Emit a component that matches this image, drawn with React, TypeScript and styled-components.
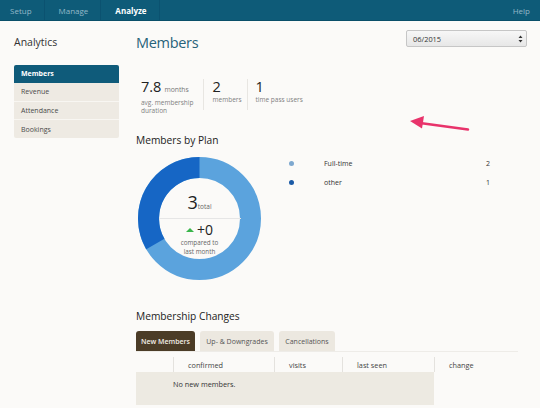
import React from 'react';
import styled, { createGlobalStyle } from 'styled-components';

const GlobalStyle = createGlobalStyle`
  html, body {
    margin: 0;
    padding: 0;
    background: #fbfaf8;
    font-family: "Open Sans", "Noto Sans", sans-serif;
    color: #333;
  }
  * { box-sizing: border-box; }
`;

const Page = styled.div`
  position: relative;
  width: 540px;
  height: 408px;
  overflow: hidden;
`;

const NavBar = styled.div`
  display: flex;
  align-items: stretch;
  height: 21px;
  background: #0e5b78;
  border-bottom: 1px solid #0a4f69;
`;

const NavItem = styled.div<{ $active?: boolean }>`
  display: flex;
  align-items: center;
  padding: 0 12px 0 14px;
  font-size: 8px;
  font-weight: ${(p) => (p.$active ? 700 : 400)};
  color: ${(p) => (p.$active ? '#ffffff' : '#94b8c8')};
  border-right: 1px solid #0b5270;
  &:first-child { padding-left: 10px; }
`;

const NavSpacer = styled.div`
  flex: 1;
`;

const NavHelp = styled.div`
  display: flex;
  align-items: center;
  padding-right: 10px;
  font-size: 8px;
  color: #94b8c8;
`;

const Body = styled.div`
  display: flex;
  gap: 17px;
  padding: 9px 13px 0 14px;
`;

const Sidebar = styled.div`
  width: 105px;
  flex-shrink: 0;
  padding-top: 5px;
`;

const SideTitle = styled.div`
  font-size: 10.5px;
  line-height: 14px;
  color: #333;
  margin-bottom: 16px;
`;

const SideMenu = styled.div`
  display: flex;
  flex-direction: column;
  border-radius: 2px;
  overflow: hidden;
`;

const SideItem = styled.div<{ $active?: boolean }>`
  height: 18.3px;
  display: flex;
  align-items: center;
  padding-left: 7px;
  font-size: 7px;
  font-weight: ${(p) => (p.$active ? 700 : 400)};
  color: ${(p) => (p.$active ? '#ffffff' : '#4a4a4a')};
  background: ${(p) => (p.$active ? '#0f5b7a' : '#eeeae3')};
  border-bottom: 1px solid ${(p) => (p.$active ? '#0f5b7a' : '#f8f6f2')};
  &:last-child { border-bottom: none; }
`;

const Main = styled.div`
  flex: 1;
  display: flex;
  flex-direction: column;
`;

const HeaderRow = styled.div`
  display: flex;
  justify-content: space-between;
  align-items: flex-start;
`;

const Title = styled.h1`
  margin: 3px 0 0 0;
  font-size: 14.5px;
  line-height: 20px;
  font-weight: 400;
  letter-spacing: -0.3px;
  color: #28637a;
`;

const Select = styled.div`
  width: 121px;
  height: 17px;
  display: flex;
  align-items: center;
  justify-content: space-between;
  padding: 0 3px 0 6px;
  font-size: 7.4px;
  color: #333;
  background: linear-gradient(#f7f7f7, #e7e7e7);
  border: 1px solid #c6c6c6;
  border-radius: 2px;
`;

const Stats = styled.div`
  display: flex;
  margin-top: 26px;
  padding-left: 5px;
`;

const Stat = styled.div<{ $pad?: number }>`
  height: 31px;
  padding-right: ${(p) => p.$pad ?? 7}px;
  margin-right: 8px;
  border-right: 1px solid #e8e6e2;
  &:last-child { border-right: none; }
`;

const StatValue = styled.div`
  font-size: 14.5px;
  line-height: 16px;
  color: #222;
`;

const StatUnit = styled.span`
  font-size: 6.8px;
  color: #777;
  margin-left: 3px;
`;

const StatLabel = styled.div`
  font-size: 6.5px;
  line-height: 8px;
  color: #808080;
  margin-top: 1px;
`;

const SectionTitle = styled.h2<{ $top: number }>`
  margin: ${(p) => p.$top}px 0 0 0;
  font-size: 10.2px;
  line-height: 14px;
  font-weight: 400;
  color: #222;
`;

const PlanRow = styled.div`
  display: flex;
  margin-top: 10px;
`;

const DonutWrap = styled.div`
  position: relative;
  width: 123px;
  height: 123px;
  flex-shrink: 0;
  margin-left: 2px;
`;

const DonutCenter = styled.div`
  position: absolute;
  inset: 0;
  display: grid;
  grid-template-rows: 1fr 1fr;
  justify-items: center;
`;

const TopHalf = styled.div`
  align-self: end;
  width: 82px;
  display: flex;
  justify-content: center;
  padding-bottom: 2px;
  border-bottom: 1px solid #e6e6e6;
`;

const BottomHalf = styled.div`
  display: flex;
  flex-direction: column;
  align-items: center;
`;

const TotalLine = styled.div`
  font-size: 18px;
  line-height: 18px;
  color: #222;
`;

const TotalUnit = styled.span`
  font-size: 6.5px;
  color: #666;
`;

const ChangeLine = styled.div`
  display: flex;
  align-items: center;
  gap: 3px;
  margin-top: 3px;
  font-size: 14px;
  line-height: 16px;
  color: #222;
`;

const UpTriangle = styled.span`
  width: 0;
  height: 0;
  border-left: 4px solid transparent;
  border-right: 4px solid transparent;
  border-bottom: 4px solid #39b54a;
`;

const Compared = styled.div`
  font-size: 6.3px;
  line-height: 9.5px;
  color: #666;
  text-align: center;
`;

const Legend = styled.div`
  flex: 1;
  display: flex;
  flex-direction: column;
  gap: 9px;
  padding: 1px 37px 0 28px;
`;

const LegendRow = styled.div`
  display: grid;
  grid-template-columns: 35px 1fr auto;
  align-items: center;
  height: 10px;
  font-size: 7px;
  color: #333;
`;

const Dot = styled.span<{ $color: string }>`
  width: 5px;
  height: 5px;
  border-radius: 50%;
  background: ${(p) => p.$color};
`;

const Tabs = styled.div`
  display: flex;
  gap: 5px;
  margin-top: 8px;
  margin-right: 9px;
  border-bottom: 1px solid #eeece8;
`;

const Tab = styled.div<{ $active?: boolean; $w: number }>`
  width: ${(p) => p.$w}px;
  height: 20px;
  display: flex;
  align-items: center;
  justify-content: center;
  font-size: 7px;
  font-weight: ${(p) => (p.$active ? 600 : 400)};
  color: ${(p) => (p.$active ? '#f3efe7' : '#555')};
  background: ${(p) => (p.$active ? '#4b3c27' : '#ece8e0')};
  border-radius: 3px 3px 0 0;
`;

const Table = styled.div`
  display: grid;
  grid-template-columns: 37px 101px 68px 92px 1fr;
  margin-top: 5px;
  margin-right: 9px;
`;

const HeadCell = styled.div`
  height: 15px;
  display: flex;
  align-items: center;
  padding-left: 14px;
  font-size: 7.3px;
  color: #444;
  border-left: 1px solid #e4e2de;
  &:first-child { border-left: none; }
`;

const EmptyRow = styled.div`
  grid-column: 1 / 5;
  height: 33px;
  background: #edeae2;
  padding: 7px 0 0 37px;
  font-size: 7.3px;
  color: #333;
`;

const Arrow = styled.svg`
  position: absolute;
  left: 405px;
  top: 112px;
`;

export default function App() {
  return (
    <Page>
      <GlobalStyle />
      <NavBar>
        <NavItem>Setup</NavItem>
        <NavItem>Manage</NavItem>
        <NavItem $active>Analyze</NavItem>
        <NavSpacer />
        <NavHelp>Help</NavHelp>
      </NavBar>
      <Body>
        <Sidebar>
          <SideTitle>Analytics</SideTitle>
          <SideMenu>
            <SideItem $active>Members</SideItem>
            <SideItem>Revenue</SideItem>
            <SideItem>Attendance</SideItem>
            <SideItem>Bookings</SideItem>
          </SideMenu>
        </Sidebar>
        <Main>
          <HeaderRow>
            <Title>Members</Title>
            <Select>
              <span>06/2015</span>
              <svg width="5" height="8" viewBox="0 0 5 8">
                <path d="M0.5 3 L2.5 0.5 L4.5 3 Z M0.5 5 L2.5 7.5 L4.5 5 Z" fill="#333" />
              </svg>
            </Select>
          </HeaderRow>
          <Stats>
            <Stat $pad={10}>
              <StatValue>
                7.8<StatUnit>months</StatUnit>
              </StatValue>
              <StatLabel>
                avg. membership
                <br />
                duration
              </StatLabel>
            </Stat>
            <Stat $pad={5}>
              <StatValue>2</StatValue>
              <StatLabel>members</StatLabel>
            </Stat>
            <Stat>
              <StatValue>1</StatValue>
              <StatLabel>time pass users</StatLabel>
            </Stat>
          </Stats>
          <SectionTitle $top={23}>Members by Plan</SectionTitle>
          <PlanRow>
            <DonutWrap>
              <svg width="123" height="123" viewBox="0 0 123 123">
                <circle cx="61.5" cy="61.5" r="51" fill="none" stroke="#5ba3dd" strokeWidth="21" />
                <path
                  d="M61.5 10.5 A51 51 0 0 0 17.33 87"
                  fill="none"
                  stroke="#1666c5"
                  strokeWidth="21"
                />
              </svg>
              <DonutCenter>
                <TopHalf>
                  <TotalLine>
                    3<TotalUnit>total</TotalUnit>
                  </TotalLine>
                </TopHalf>
                <BottomHalf>
                  <ChangeLine>
                    <UpTriangle />
                    +0
                  </ChangeLine>
                  <Compared>
                    compared to
                    <br />
                    last month
                  </Compared>
                </BottomHalf>
              </DonutCenter>
            </DonutWrap>
            <Legend>
              <LegendRow>
                <Dot $color="#7ea8cf" />
                <span>Full-time</span>
                <span>2</span>
              </LegendRow>
              <LegendRow>
                <Dot $color="#1b5aa6" />
                <span>other</span>
                <span>1</span>
              </LegendRow>
            </Legend>
          </PlanRow>
          <SectionTitle $top={29}>Membership Changes</SectionTitle>
          <Tabs>
            <Tab $active $w={59}>New Members</Tab>
            <Tab $w={74}>Up- &amp; Downgrades</Tab>
            <Tab $w={56}>Cancellations</Tab>
          </Tabs>
          <Table>
            <HeadCell />
            <HeadCell>confirmed</HeadCell>
            <HeadCell>visits</HeadCell>
            <HeadCell>last seen</HeadCell>
            <HeadCell>change</HeadCell>
            <EmptyRow>No new members.</EmptyRow>
          </Table>
        </Main>
      </Body>
      <Arrow width="66" height="22" viewBox="0 0 66 22">
        <path d="M63 17.5 L15 11" stroke="#e8336b" strokeWidth="2.5" strokeLinecap="round" />
        <path d="M5 9 L19 4 L17 16.5 Z" fill="#e8336b" />
      </Arrow>
    </Page>
  );
}
